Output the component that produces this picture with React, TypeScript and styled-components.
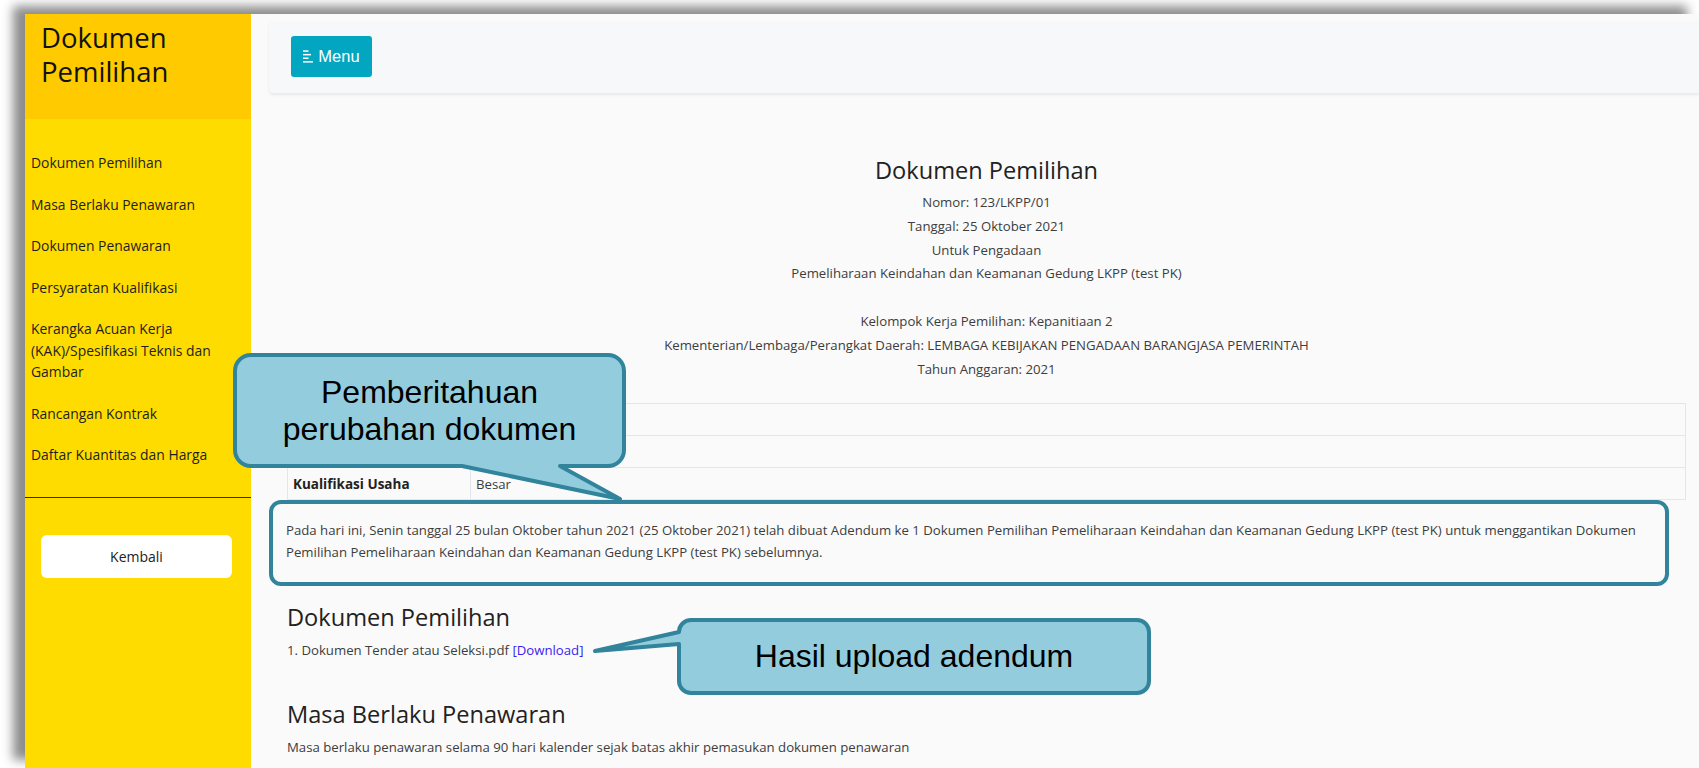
import styled, { createGlobalStyle } from "styled-components";

const GlobalStyle = createGlobalStyle`
  html, body {
    margin: 0;
    padding: 0;
    background: #ffffff;
    overflow: hidden;
  }
  body {
    font-family: "Open Sans", "DejaVu Sans", sans-serif;
  }
`;

const Screen = styled.div`
  position: relative;
  display: flex;
  margin: 14px 0 0 25px;
  height: 754px;
  box-shadow: -12px -8px 10px rgba(0, 0, 0, 0.45);
`;

const Sidebar = styled.aside`
  width: 226px;
  flex-shrink: 0;
  background: #ffdc00;
  display: flex;
  flex-direction: column;
`;

const SideHeader = styled.div`
  height: 105px;
  box-sizing: border-box;
  background: #ffcb00;
  padding: 7px 16px 0;
`;

const SideTitle = styled.h3`
  margin: 0;
  font-size: 27.5px;
  line-height: 33.6px;
  font-weight: 500;
  color: #111;
`;

const SideNav = styled.nav`
  display: flex;
  flex-direction: column;
  gap: 20px;
  padding: 33px 12px 0 6px;
`;

const SideLink = styled.a`
  font-size: 13.9px;
  line-height: 21.5px;
  color: #1e1e1e;
  text-decoration: none;
`;

const Divider = styled.hr`
  margin: 31px 0 0;
  border: 0;
  border-top: 1px solid #2a2a2a;
`;

const BackButton = styled.button`
  margin: 37px 19px 0 16px;
  height: 43px;
  border: 0;
  border-radius: 6px;
  background: #ffffff;
  font-family: "Open Sans", sans-serif;
  font-size: 14px;
  color: #222;
`;

const Main = styled.main`
  flex: 1;
  min-width: 0;
  background: #fafafa;
  display: flex;
  flex-direction: column;
`;

const Navbar = styled.div`
  margin: 7px 0 0 18px;
  height: 72px;
  box-sizing: border-box;
  padding: 15px 22px;
  background: #f7f8f9;
  border-radius: 4px 0 0 4px;
  box-shadow: 0 2px 3px rgba(0, 0, 0, 0.07);
`;

const MenuButton = styled.button`
  display: flex;
  align-items: center;
  justify-content: center;
  gap: 5px;
  width: 81px;
  height: 41px;
  border: 0;
  border-radius: 3px;
  background: #02a6c1;
  color: #ffffff;
  font-family: "Liberation Sans", Arial, sans-serif;
  font-size: 16.5px;
  padding: 0 0 1px;
  svg {
    flex-shrink: 0;
    display: block;
  }
`;

const Content = styled.div`
  padding: 0 13px 0 36px;
  color: #3d3d3d;
  font-size: 13.2px;
`;

const Cover = styled.div`
  text-align: center;
  line-height: 23.8px;
`;

const CoverTitle = styled.h3`
  margin: 64px 0 7px;
  font-size: 23.6px;
  line-height: 27px;
  font-weight: 500;
  color: #222;
`;

const Line = styled.div`
  min-height: 23.8px;
`;

const InfoTable = styled.table`
  width: 100%;
  margin-top: 22px;
  border-collapse: collapse;
  line-height: 22px;
  td {
    border: 1px solid #e3e6ea;
    padding: 4.5px 5px;
    vertical-align: top;
  }
  td:first-child {
    width: 172px;
    font-size: 13.5px;
    font-weight: 700;
    color: #222;
  }
`;

const Highlight = styled.div`
  margin: 0 17px 0 -18px;
  padding: 16px 0 19px 13px;
  border: 4px solid #31849b;
  border-radius: 12px;
`;

const Paragraph = styled.p`
  margin: 0;
  line-height: 21.5px;
`;

const Section = styled.h4<{ $gap: number }>`
  margin: ${(p) => p.$gap}px 0 0;
  font-size: 23.6px;
  line-height: 27px;
  font-weight: 500;
  color: #222;
`;

const Item = styled.div<{ $gap: number }>`
  margin-top: ${(p) => p.$gap}px;
  line-height: 22px;
  a {
    color: #3a1cf2;
    text-decoration: none;
  }
`;

const Callout = styled.div<{ $left: number; $top: number; $w: number; $h: number }>`
  position: absolute;
  left: ${(p) => p.$left}px;
  top: ${(p) => p.$top}px;
  width: ${(p) => p.$w}px;
  height: ${(p) => p.$h}px;
  display: flex;
  align-items: center;
  justify-content: center;
  svg {
    position: absolute;
    left: 0;
    top: 0;
    overflow: visible;
  }
`;

const CalloutText = styled.div`
  position: relative;
  text-align: center;
  font-family: "Liberation Sans", Arial, sans-serif;
  font-size: 32px;
  line-height: 37px;
  color: #000;
`;

function MenuIcon() {
  return (
    <svg width="10" height="13" viewBox="0 0 10 13">
      <g fill="#fff">
        <rect x="0" y="0.3" width="5.5" height="1.5" />
        <rect x="0" y="3.9" width="8" height="1.5" />
        <rect x="0" y="7.5" width="5.5" height="1.5" />
        <rect x="0" y="11.1" width="10" height="1.5" />
      </g>
    </svg>
  );
}

// one outline for box + pointer so the stroke runs unbroken
function roundedBox(w: number, h: number, r: number, tail: string) {
  const a = 2;
  const b = w - 2;
  const c = h - 2;
  return tail === "bottom"
    ? `M${a + r},${a} H${b - r} A${r},${r} 0 0 1 ${b},${a + r} V${c - r} A${r},${r} 0 0 1 ${b - r},${c} H327 L387,146 L229,${c} H${a + r} A${r},${r} 0 0 1 ${a},${c - r} V${a + r} A${r},${r} 0 0 1 ${a + r},${a} Z`
    : `M${a + r},${a} H${b - r} A${r},${r} 0 0 1 ${b},${a + r} V${c - r} A${r},${r} 0 0 1 ${b - r},${c} H${a + r} A${r},${r} 0 0 1 ${a},${c - r} V26 L-82,33 L${a},${a + r} A${r},${r} 0 0 1 ${a + r},${a} Z`;
}

const menuItems = [
  "Dokumen Pemilihan",
  "Masa Berlaku Penawaran",
  "Dokumen Penawaran",
  "Persyaratan Kualifikasi",
  "Kerangka Acuan Kerja (KAK)/Spesifikasi Teknis dan Gambar",
  "Rancangan Kontrak",
  "Daftar Kuantitas dan Harga",
];

export default function App() {
  return (
    <>
      <GlobalStyle />
      <Screen>
        <Sidebar>
          <SideHeader>
            <SideTitle>
              Dokumen
              <br />
              Pemilihan
            </SideTitle>
          </SideHeader>
          <SideNav>
            {menuItems.map((m) => (
              <SideLink key={m} href="#">
                {m}
              </SideLink>
            ))}
          </SideNav>
          <Divider />
          <BackButton>Kembali</BackButton>
        </Sidebar>

        <Main>
          <Navbar>
            <MenuButton>
              <MenuIcon />
              Menu
            </MenuButton>
          </Navbar>
          <Content>
            <Cover>
              <CoverTitle>Dokumen Pemilihan</CoverTitle>
              <Line>Nomor: 123/LKPP/01</Line>
              <Line>Tanggal: 25 Oktober 2021</Line>
              <Line>Untuk Pengadaan</Line>
              <Line>Pemeliharaan Keindahan dan Keamanan Gedung LKPP (test PK)</Line>
              <Line />
              <Line>Kelompok Kerja Pemilihan: Kepanitiaan 2</Line>
              <Line>
                Kementerian/Lembaga/Perangkat Daerah: LEMBAGA KEBIJAKAN PENGADAAN BARANGJASA PEMERINTAH
              </Line>
              <Line>Tahun Anggaran: 2021</Line>
            </Cover>

            <InfoTable>
              <tbody>
                <tr>
                  <td>&nbsp;</td>
                  <td>&nbsp;</td>
                </tr>
                <tr>
                  <td>&nbsp;</td>
                  <td>&nbsp;</td>
                </tr>
                <tr>
                  <td>Kualifikasi Usaha</td>
                  <td>Besar</td>
                </tr>
              </tbody>
            </InfoTable>

            <Highlight>
              <Paragraph>
                Pada hari ini, Senin tanggal 25 bulan Oktober tahun 2021 (25 Oktober 2021) telah dibuat
                Adendum ke 1 Dokumen Pemilihan Pemeliharaan Keindahan dan Keamanan Gedung LKPP (test PK)
                untuk menggantikan Dokumen Pemilihan Pemeliharaan Keindahan dan Keamanan Gedung LKPP
                (test PK) sebelumnya.
              </Paragraph>
            </Highlight>

            <Section $gap={18}>Dokumen Pemilihan</Section>
            <Item $gap={8}>
              1. Dokumen Tender atau Seleksi.pdf <a href="#">[Download]</a>
            </Item>
            <Section $gap={40}>Masa Berlaku Penawaran</Section>
            <Item $gap={8}>
              Masa berlaku penawaran selama 90 hari kalender sejak batas akhir pemasukan dokumen penawaran
            </Item>
          </Content>
        </Main>

        <Callout $left={208} $top={339} $w={393} $h={115}>
          <svg width="393" height="115">
            <path d={roundedBox(393, 115, 16, "bottom")} fill="#93cddd" stroke="#31849b" strokeWidth="4" strokeLinejoin="round" />
          </svg>
          <CalloutText>
            Pemberitahuan
            <br />
            perubahan dokumen
          </CalloutText>
        </Callout>

        <Callout $left={652} $top={604} $w={474} $h={77}>
          <svg width="474" height="77">
            <path d={roundedBox(474, 77, 12, "left")} fill="#93cddd" stroke="#31849b" strokeWidth="4" strokeLinejoin="round" />
          </svg>
          <CalloutText>Hasil upload adendum</CalloutText>
        </Callout>
      </Screen>
    </>
  );
}
